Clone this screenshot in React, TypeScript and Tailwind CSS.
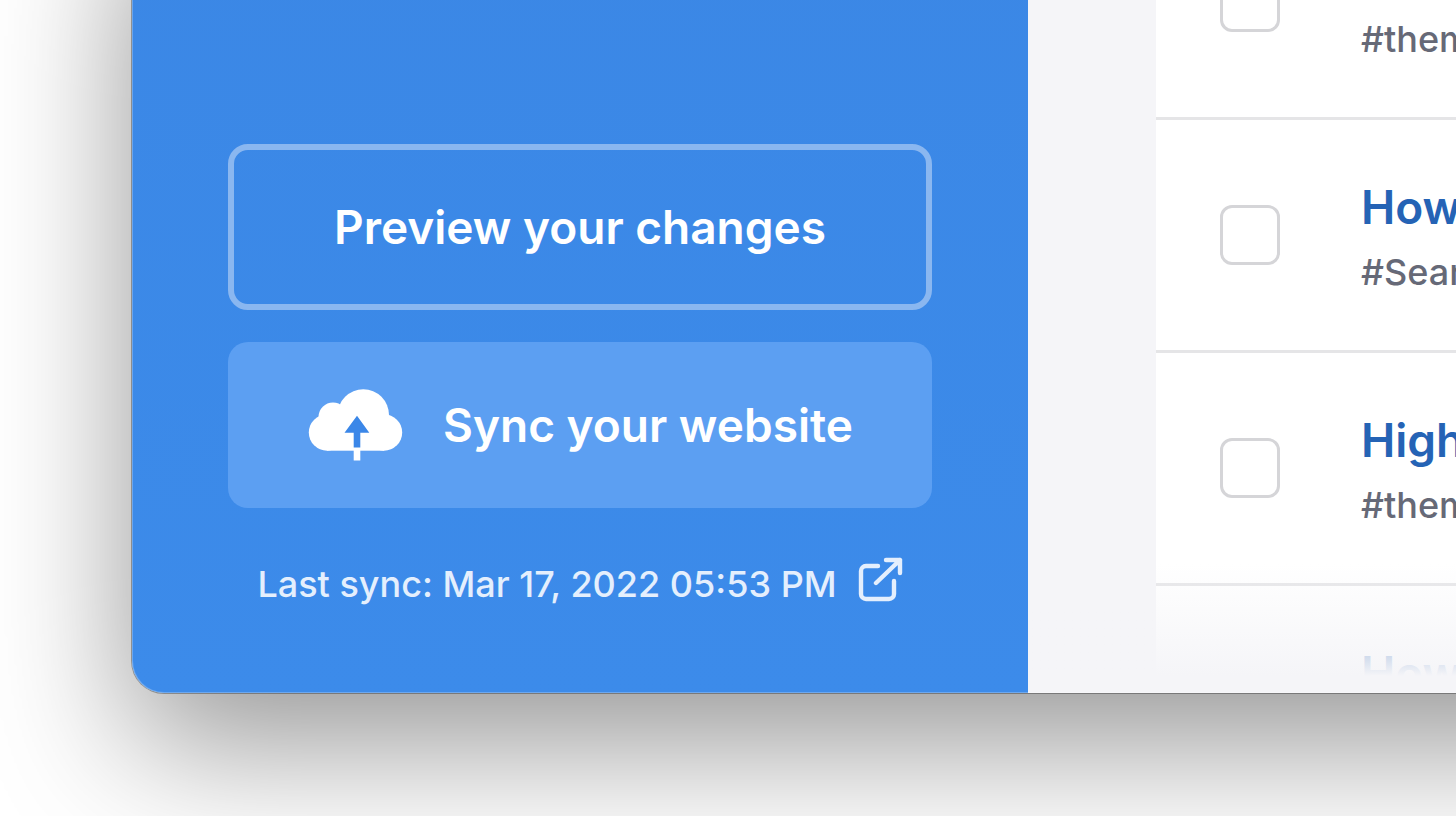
import { useState } from 'react'
import { clsx } from 'clsx'

const posts = [
  { id: 'theme', title: 'How to change your theme', tags: '#themes' },
  { id: 'search', title: 'How to improve your search results', tags: '#Search' },
  { id: 'highlight', title: 'Highlights of the new themes', tags: '#themes' },
  { id: 'start', title: 'How to get started', tags: '#start' }
]

export default function App() {
  return (
    <div className="h-screen overflow-hidden bg-white pl-[132px] font-['Inter','Liberation_Sans',sans-serif]">
      <div className="relative -mt-[113px] -mr-60 flex overflow-hidden rounded-bl-[32px] shadow-[0_0_0_1px_rgba(0,0,0,0.3),0_50px_140px_rgba(0,0,0,0.42)]">
        <Sidebar />
        <PostList />
        <div className="pointer-events-none absolute inset-0 rounded-bl-[32px] border-b border-l border-white/25" />
      </div>
    </div>
  )
}

function Sidebar() {
  return (
    <aside className="flex w-[896px] shrink-0 flex-col justify-end bg-linear-to-b from-[#3b87e5] to-[#3c8bea] px-24 pb-[81px]">
      <div className="flex flex-col gap-8">
        <button className="flex h-[166px] items-center justify-center rounded-[20px] border-6 border-[#8ab7f0] text-[46px] font-semibold text-white">
          Preview your changes
        </button>
        <button className="flex h-[166px] items-center justify-center gap-10 rounded-[20px] bg-[#5c9ff2] text-[46px] font-semibold text-white">
          <CloudIcon />
          Sync your website
        </button>
      </div>
      <a
        href="#sync"
        className="mt-12 flex items-start justify-center gap-5 text-[36px] leading-14 font-medium whitespace-nowrap text-[#e4effd]"
      >
        Last sync: Mar 17, 2022 05:53 PM
        <ExternalIcon />
      </a>
    </aside>
  )
}

function PostList() {
  return (
    <main className="relative min-w-0 flex-1 bg-[#f5f5f8] pb-[17px] pl-32">
      <ul className="bg-white">
        {posts.map((post, i) => (
          <PostRow key={post.id} {...post} peek={i === posts.length - 1} />
        ))}
      </ul>
      {/* fades the list out towards the bottom edge */}
      <div className="pointer-events-none absolute inset-x-0 bottom-[17px] h-28 bg-linear-to-b from-[#f5f5f8]/0 to-[#f5f5f8]" />
    </main>
  )
}

function PostRow({
  id,
  title,
  tags,
  peek
}: {
  id: string
  title: string
  tags: string
  peek: boolean
}) {
  const [checked, setChecked] = useState(false)

  return (
    <li
      className={clsx(
        'overflow-hidden',
        peek ? 'h-[90px]' : 'border-b-3 border-[#e5e5e7]'
      )}
    >
      <div className="flex items-center gap-[81px] py-[50px] pl-16">
        <input
          id={id}
          type="checkbox"
          checked={checked}
          onChange={(e) => setChecked(e.target.checked)}
          className={clsx(
            'size-15 shrink-0 appearance-none rounded-xl border-3 border-[#d5d5d8] bg-white checked:bg-[#3b87e5]',
            peek && 'invisible'
          )}
        />
        <label htmlFor={id} className="whitespace-nowrap">
          <span className="block text-[46px] leading-[74px] font-semibold text-[#2563b5]">{title}</span>
          <span className="block text-[36px] leading-14 font-medium text-[#666977]">{tags}</span>
        </label>
      </div>
    </li>
  )
}

function CloudIcon() {
  return (
    <svg width="96" height="74" viewBox="0 0 96 74" aria-hidden="true">
      <g fill="#fff">
        <circle cx="20" cy="44.5" r="18.2" />
        <circle cx="26" cy="29" r="14.5" />
        <circle cx="56.3" cy="27" r="25.7" />
        <circle cx="77" cy="44.5" r="18.2" />
        <rect x="20" y="30" width="57" height="32.7" />
        <rect x="46.7" y="59.5" width="6.6" height="13" />
      </g>
      <path d="M50 27.7 62.3 44.7H53.3V59.5H46.7V44.7H37.5Z" fill="#3b87e8" />
    </svg>
  )
}

function ExternalIcon() {
  return (
    <svg
      width="46"
      height="46"
      viewBox="0 0 46 46"
      fill="none"
      stroke="currentColor"
      strokeWidth="4.4"
      strokeLinecap="round"
      strokeLinejoin="round"
      aria-hidden="true"
    >
      <path d="M21 10H9a5 5 0 0 0-5 5v23a5 5 0 0 0 5 5h23a5 5 0 0 0 5-5V25" />
      <path d="M29 4h14v13M43 4 19 27" />
    </svg>
  )
}
